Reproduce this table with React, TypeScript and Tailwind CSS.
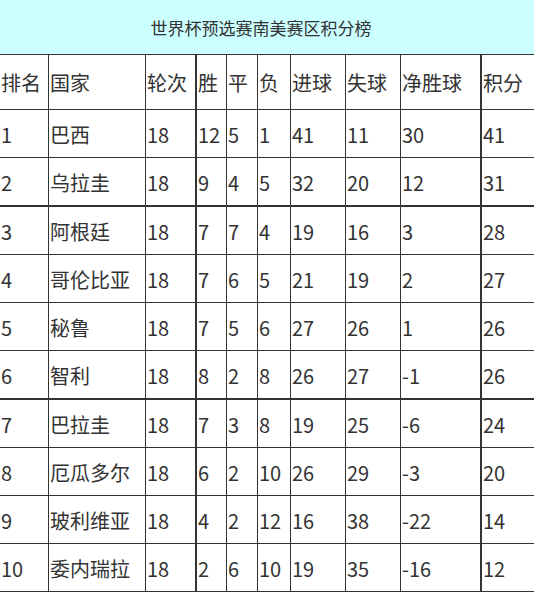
import React from 'react';

type Row = [string, string, string, string, string, string, string, string, string, string];

const header: Row = ['排名', '国家', '轮次', '胜', '平', '负', '进球', '失球', '净胜球', '积分'];

const rows: Row[] = [
  ['1', '巴西', '18', '12', '5', '1', '41', '11', '30', '41'],
  ['2', '乌拉圭', '18', '9', '4', '5', '32', '20', '12', '31'],
  ['3', '阿根廷', '18', '7', '7', '4', '19', '16', '3', '28'],
  ['4', '哥伦比亚', '18', '7', '6', '5', '21', '19', '2', '27'],
  ['5', '秘鲁', '18', '7', '5', '6', '27', '26', '1', '26'],
  ['6', '智利', '18', '8', '2', '8', '26', '27', '-1', '26'],
  ['7', '巴拉圭', '18', '7', '3', '8', '19', '25', '-6', '24'],
  ['8', '厄瓜多尔', '18', '6', '2', '10', '26', '29', '-3', '20'],
  ['9', '玻利维亚', '18', '4', '2', '12', '16', '38', '-22', '14'],
  ['10', '委内瑞拉', '18', '2', '6', '10', '19', '35', '-16', '12'],
];

// heavy separators after 2nd and 6th team (qualifying zones)
const thickAbove = new Set([2, 6]);

const cellBorder = [
  '',
  'border-l',
  'border-l',
  'border-l-2',
  'border-l',
  'border-l',
  'border-l',
  'border-l',
  'border-l',
  'border-l-2',
];

const TableRow = ({ cells, className }: { cells: Row; className: string }) => (
  <div className={`grid grid-cols-[48px_97px_50px_31px_31px_33px_55px_55px_80px_1fr] border-[#333] ${className}`}>
    {cells.map((c, i) => (
      <div
        key={i}
        className={`flex items-center pl-[1px] pt-[2px] border-[#333] whitespace-nowrap ${cellBorder[i]}`}
      >
        {c}
      </div>
    ))}
  </div>
);

export default function App() {
  return (
    <div
      className="w-[534px] h-[595px] bg-white text-[#333] overflow-hidden"
      style={{ fontFamily: '"Noto Sans CJK SC", "Noto Sans", sans-serif' }}
    >
      <div className="h-[54px] bg-[#ccffff] flex items-center justify-center pr-[12px] text-[17px] text-[#333] pt-[1px]">
        世界杯预选赛南美赛区积分榜
      </div>
      <div className="text-[20px] leading-none">
        <TableRow cells={header} className="border-t h-[55px]" />
        {rows.map((r, i) => (
          <TableRow
            key={i}
            cells={r}
            className={thickAbove.has(i) ? 'border-t-2 h-[49px]' : 'border-t h-[48px]'}
          />
        ))}
        <div className="border-t border-[#333]" />
      </div>
    </div>
  );
}
